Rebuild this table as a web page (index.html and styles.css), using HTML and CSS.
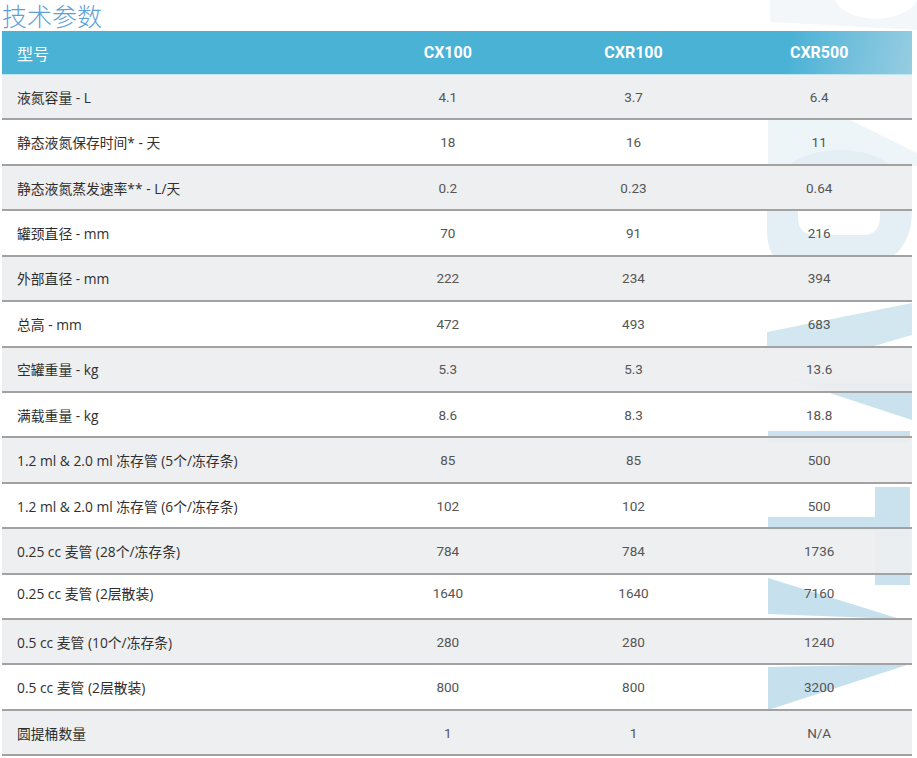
FILE: index.html
```html
<!DOCTYPE html>
<html lang="zh-CN">
<head>
<meta charset="utf-8">
<title>技术参数</title>
<link rel="stylesheet" href="styles.css">
</head>
<body>
<svg class="watermark" width="917" height="758" viewBox="0 0 917 758" aria-hidden="true">
  <path d="M770 0 L917 0 L917 30 L770 22 Z M835 0 A42 24 0 0 0 917 0 Z" fill="#f3f7fa" fill-rule="evenodd"/>
  <path d="M768 120 L850 120 L917 153 L917 166 L768 166 Z" fill="#eef5f8"/>
  <path d="M767 210 C767 170 800 150 840 150 C885 150 912 175 912 210 C912 240 900 262 860 270 L790 270 C775 265 767 250 767 230 Z M816 180 L862 180 Q880 180 880 198 L880 217 Q880 235 862 235 L816 235 Q798 235 798 217 L798 198 Q798 180 816 180 Z" fill="#e4eff5" fill-rule="evenodd"/>
  <path d="M767 332 L912 303 L912 335 L860 350 L767 350 Z" fill="#d2e7f0"/>
  <path d="M790 380 L912 380 L912 420 Z" fill="#c9e2ee"/>
  <rect x="768" y="431" width="142" height="12" fill="#c9e2ee"/>
  <rect x="875" y="487" width="35" height="98" fill="#c9e2ee"/>
  <rect x="768" y="517" width="142" height="14" fill="#c9e2ee"/>
  <path d="M768 578 L900 619 L768 614 Z" fill="#c6e1ed"/>
  <path d="M768 667 L910 664 L768 710 Z" fill="#c6e1ed"/>
</svg>
<div class="page">
  <h1 class="title">技术参数</h1>
  <div class="spec">
    <div class="row head">
      <div class="label">型号</div>
      <div class="val">CX100</div>
      <div class="val">CXR100</div>
      <div class="val">CXR500</div>
    </div>
    <div class="row odd"><div class="label">液氮容量 - L</div><div class="val">4.1</div><div class="val">3.7</div><div class="val">6.4</div></div>
    <div class="row"><div class="label">静态液氮保存时间* - 天</div><div class="val">18</div><div class="val">16</div><div class="val">11</div></div>
    <div class="row odd"><div class="label">静态液氮蒸发速率** - L/天</div><div class="val">0.2</div><div class="val">0.23</div><div class="val">0.64</div></div>
    <div class="row"><div class="label">罐颈直径 - mm</div><div class="val">70</div><div class="val">91</div><div class="val">216</div></div>
    <div class="row odd"><div class="label">外部直径 - mm</div><div class="val">222</div><div class="val">234</div><div class="val">394</div></div>
    <div class="row"><div class="label">总高 - mm</div><div class="val">472</div><div class="val">493</div><div class="val">683</div></div>
    <div class="row odd"><div class="label">空罐重量 - kg</div><div class="val">5.3</div><div class="val">5.3</div><div class="val">13.6</div></div>
    <div class="row"><div class="label">满载重量 - kg</div><div class="val">8.6</div><div class="val">8.3</div><div class="val">18.8</div></div>
    <div class="row odd"><div class="label">1.2 ml &amp; 2.0 ml 冻存管 (5个/冻存条)</div><div class="val">85</div><div class="val">85</div><div class="val">500</div></div>
    <div class="row"><div class="label">1.2 ml &amp; 2.0 ml 冻存管 (6个/冻存条)</div><div class="val">102</div><div class="val">102</div><div class="val">500</div></div>
    <div class="row odd"><div class="label">0.25 cc 麦管 (28个/冻存条)</div><div class="val">784</div><div class="val">784</div><div class="val">1736</div></div>
    <div class="row"><div class="label up">0.25 cc 麦管 (2层散装)</div><div class="val up">1640</div><div class="val up">1640</div><div class="val up">7160</div></div>
    <div class="row odd"><div class="label">0.5 cc 麦管 (10个/冻存条)</div><div class="val">280</div><div class="val">280</div><div class="val">1240</div></div>
    <div class="row"><div class="label">0.5 cc 麦管 (2层散装)</div><div class="val">800</div><div class="val">800</div><div class="val">3200</div></div>
    <div class="row odd"><div class="label">圆提桶数量</div><div class="val">1</div><div class="val">1</div><div class="val">N/A</div></div>
  </div>
</div>
</body>
</html>
```
FILE: styles.css
```css
html, body {
  margin: 0;
  padding: 0;
  background: #ffffff;
}

body {
  position: relative;
  width: 917px;
  height: 758px;
  overflow: hidden;
}

.watermark {
  position: absolute;
  left: 0;
  top: 0;
  z-index: 0;
}

.page {
  position: relative;
  z-index: 1;
  padding-left: 2px;
  width: 910px;
}

.title {
  margin: 0;
  height: 31px;
  padding-top: 1px;
  box-sizing: border-box;
  font-family: "Noto Sans CJK SC", sans-serif;
  font-weight: 300;
  font-size: 25px;
  line-height: 29px;
  color: #5f9fd8;
}

.spec {
  display: flex;
  flex-direction: column;
}

.row {
  display: grid;
  grid-template-columns: 353px 1fr 1fr 1fr;
  align-items: center;
  height: 45.43px;
  box-sizing: border-box;
  border-bottom: 2px solid #a2a2a2;
}

.row.odd {
  background: rgba(237, 238, 240, 0.95);
}

.row.head {
  height: 44px;
  border-bottom: 1px solid #bfe3ef;
  background: linear-gradient(100deg, #4ab2d5 0%, #4ab2d5 86%, #72bfdc 93%, #96cde1 100%);
}

.label {
  padding-left: 15px;
  font-family: "Open Sans", "Noto Sans CJK SC", sans-serif;
  font-size: 13.8px;
  color: #2f2f2f;
}

.val {
  text-align: center;
  font-family: Roboto, "Noto Sans CJK SC", sans-serif;
  font-size: 13.5px;
  color: #555555;
}

.up {
  position: relative;
  top: -3px;
}

.head .label {
  font-family: "Noto Sans CJK SC", sans-serif;
  font-size: 16px;
  color: #ffffff;
}

.head .val {
  font-family: Roboto, sans-serif;
  font-weight: 700;
  font-size: 16px;
  color: #ffffff;
}
```
